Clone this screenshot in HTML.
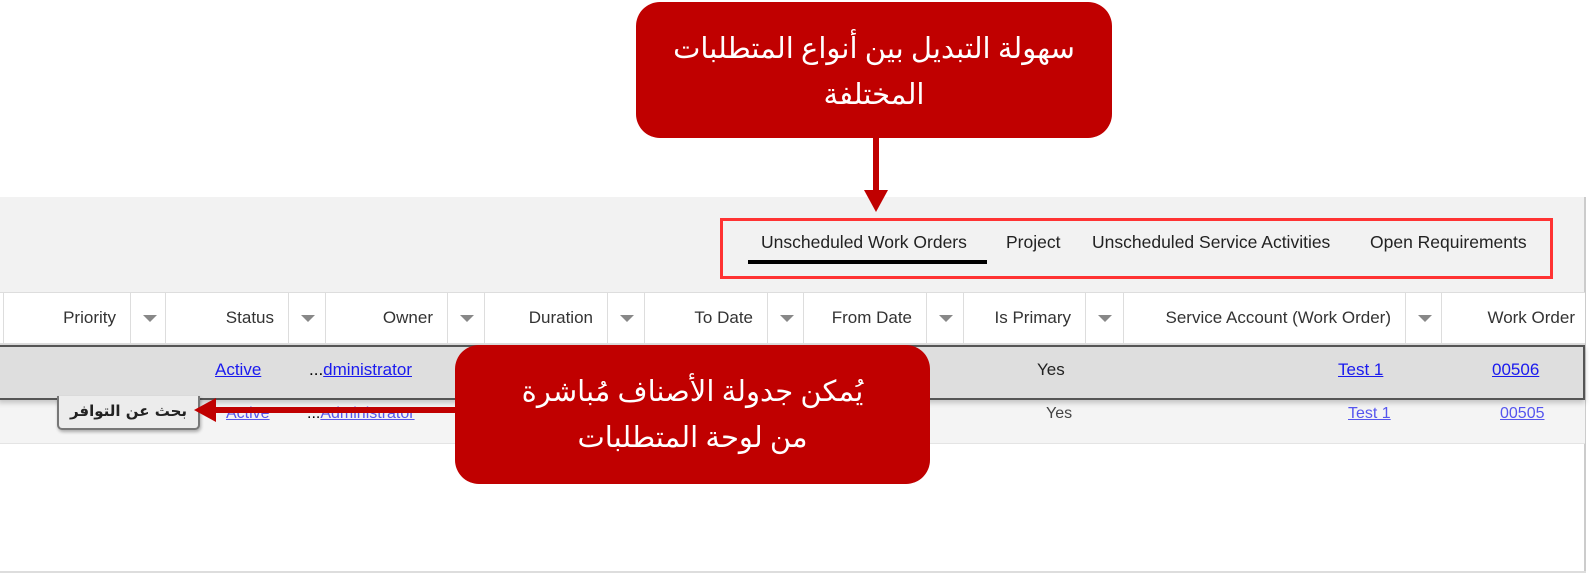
<!DOCTYPE html>
<html><head><meta charset="utf-8"><style>
body{margin:0;width:1590px;height:580px;background:#fff;position:relative;overflow:hidden;font-family:"Segoe UI","Liberation Sans","DejaVu Sans",sans-serif;}
.a{position:absolute}
.panel{left:0;top:197px;width:1585px;height:95px;background:#f2f2f2}
.hdr{left:0;top:292px;width:1585px;height:50px;background:#fff;border-top:1px solid #ddd;border-bottom:2px solid #ddd}
.c{position:absolute;top:0;height:50px;border-left:1px solid #ddd;font-size:17px;color:#333;line-height:50px;text-align:right;box-sizing:border-box;padding-right:14px}
.dd{position:absolute;top:0;height:50px;border-left:1px solid #ddd;box-sizing:border-box}
.dd:after{content:"";position:absolute;left:12px;top:22px;border-left:7px solid transparent;border-right:7px solid transparent;border-top:7px solid #888}
a{color:#1a1aee;text-decoration:underline}
.cell{position:absolute;font-size:17px;text-align:right}
.callout{background:#c00000;border-radius:24px;color:#fff;font-family:"Liberation Serif","DejaVu Sans",serif;text-align:center;font-size:29px;line-height:46px;direction:rtl}
.tab{position:absolute;top:232px;font-size:17.5px;color:#222}
</style></head><body>
<div class="a panel"></div>
<div class="a" style="left:1584px;top:197px;width:2px;height:376px;background:#ccc"></div>
<div class="a" style="left:0;top:571px;width:1586px;height:2px;background:#ddd"></div>
<div class="a" style="left:720px;top:218px;width:827px;height:55px;border:3px solid #ff3333"></div>
<div class="tab" style="left:761px">Unscheduled Work Orders</div>
<div class="tab" style="left:1006px">Project</div>
<div class="tab" style="left:1092px">Unscheduled Service Activities</div>
<div class="tab" style="left:1370px">Open Requirements</div>
<div class="a" style="left:748px;top:260px;width:239px;height:4px;background:#000"></div>
<div class="a hdr">
<div class="c" style="left:3px;width:127px">Priority</div><div class="dd" style="left:130px;width:35px"></div>
<div class="c" style="left:165px;width:123px">Status</div><div class="dd" style="left:288px;width:37px"></div>
<div class="c" style="left:325px;width:122px">Owner</div><div class="dd" style="left:447px;width:37px"></div>
<div class="c" style="left:484px;width:123px">Duration</div><div class="dd" style="left:607px;width:37px"></div>
<div class="c" style="left:644px;width:123px">To Date</div><div class="dd" style="left:767px;width:36px"></div>
<div class="c" style="left:803px;width:123px">From Date</div><div class="dd" style="left:926px;width:37px"></div>
<div class="c" style="left:963px;width:122px">Is Primary</div><div class="dd" style="left:1085px;width:38px"></div>
<div class="c" style="left:1123px;width:282px">Service Account (Work Order)</div><div class="dd" style="left:1405px;width:36px"></div>
<div class="c" style="left:1441px;width:144px;padding-right:10px">Work Order</div>
</div>
<div class="a" style="left:0;top:398px;width:1585px;height:45px;background:#f4f4f4;border-bottom:1px solid #e4e4e4"></div>
<div class="a" style="left:-2px;top:345px;width:1583px;height:51px;background:#dedede;border:2px solid #555;box-shadow:0 3px 5px rgba(0,0,0,.2)"></div>
<div class="cell" style="left:215px;top:360px"><a>Active</a></div>
<div class="cell" style="left:309px;top:360px">...<a>dministrator</a></div>
<div class="cell" style="left:1037px;top:360px;color:#222">Yes</div>
<div class="cell" style="left:1338px;top:360px"><a>Test 1</a></div>
<div class="cell" style="left:1492px;top:360px"><a>00506</a></div>
<div class="cell" style="left:226px;top:405px;font-size:16px"><a style="color:#55e">Active</a></div>
<div class="cell" style="left:307px;top:405px;font-size:16px">...<a style="color:#55e">Administrator</a></div>
<div class="cell" style="left:1046px;top:405px;font-size:16px;color:#444">Yes</div>
<div class="cell" style="left:1348px;top:405px;font-size:16px"><a style="color:#55e">Test 1</a></div>
<div class="cell" style="left:1500px;top:405px;font-size:16px"><a style="color:#55e">00505</a></div>
<div class="a" style="left:57px;top:396px;width:139px;height:32px;background:#ececec;border:2px solid #777;border-top:none;border-radius:0 0 5px 5px;box-shadow:1px 2px 3px rgba(0,0,0,.3);font-family:'DejaVu Sans',sans-serif;font-size:15px;font-weight:bold;text-align:center;line-height:30px;direction:rtl;color:#222">بحث عن التوافر</div>
<div class="a callout" style="left:636px;top:2px;width:476px;height:136px;padding-top:24px;box-sizing:border-box">سهولة التبديل بين أنواع المتطلبات<br>المختلفة</div>
<div class="a" style="left:873px;top:138px;width:6px;height:56px;background:#c00000"></div>
<div class="a" style="left:864px;top:190px;border-left:12px solid transparent;border-right:12px solid transparent;border-top:22px solid #c00000"></div>
<div class="a callout" style="left:455px;top:345px;width:475px;height:139px;padding-top:24px;box-sizing:border-box">يُمكن جدولة الأصناف مُباشرة<br>من لوحة المتطلبات</div>
<div class="a" style="left:210px;top:407px;width:246px;height:6px;background:#c00000"></div>
<div class="a" style="left:194px;top:398px;border-top:12px solid transparent;border-bottom:12px solid transparent;border-right:22px solid #c00000"></div>
</body></html>
